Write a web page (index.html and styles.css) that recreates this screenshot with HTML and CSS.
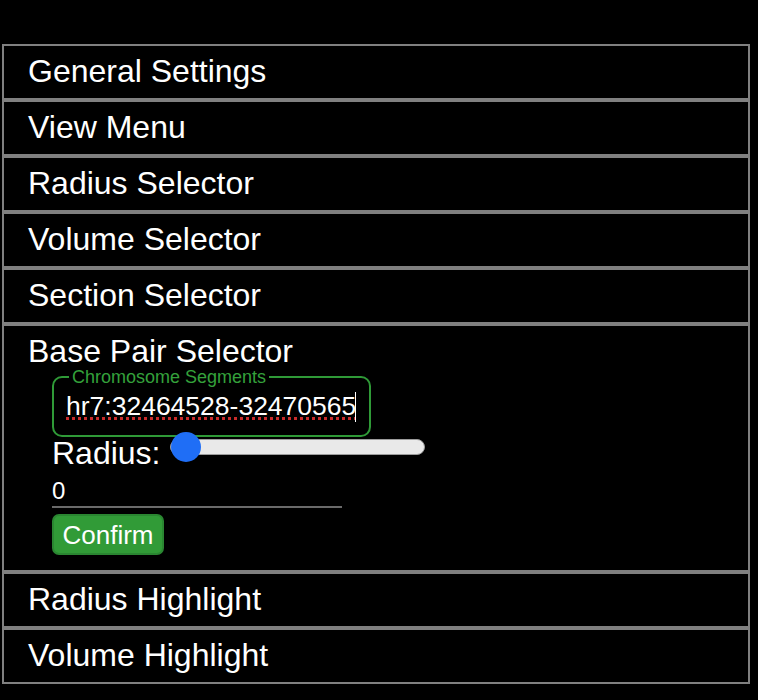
FILE: index.html
```html
<!DOCTYPE html>
<html>
<head>
<meta charset="utf-8">
<link rel="stylesheet" href="styles.css">
</head>
<body>
<div class="panel">
  <div class="item"><div class="item-title">General Settings</div></div>
  <div class="item"><div class="item-title">View Menu</div></div>
  <div class="item"><div class="item-title">Radius Selector</div></div>
  <div class="item"><div class="item-title">Volume Selector</div></div>
  <div class="item"><div class="item-title">Section Selector</div></div>
  <div class="item item-open">
    <div class="item-title">Base Pair Selector</div>
    <div class="item-body">
      <fieldset class="segments">
        <legend class="segments-legend">Chromosome Segments</legend>
        <div class="seg-field">
          <input class="seg-input" type="text" value="hr7:32464528-32470565" spellcheck="false">
          <span class="caret"></span>
        </div>
      </fieldset>
      <div class="radius-row">
        <label class="radius-label">Radius:</label>
        <input class="radius-range" type="range" min="0" max="100" value="0">
      </div>
      <input class="radius-value" type="text" value="0">
      <button class="confirm">Confirm</button>
    </div>
  </div>
  <div class="item"><div class="item-title">Radius Highlight</div></div>
  <div class="item"><div class="item-title">Volume Highlight</div></div>
</div>
</body>
</html>
```
FILE: styles.css
```css
html, body {
  margin: 0;
  padding: 0;
  background: #000;
  color: #fff;
  font-family: "Liberation Sans", Arial, sans-serif;
}

.panel {
  margin: 44px 0 0 2px;
  width: 748px;
  display: flex;
  flex-direction: column;
}

.item {
  border: 2px solid #808080;
}

.item-title {
  font-size: 32px;
  line-height: 36px;
  padding: 7px 24px 9px;
}

.item-open .item-title {
  line-height: 32px;
  padding: 9px 24px 0;
}

.item-body {
  display: flex;
  flex-direction: column;
  align-items: flex-start;
  padding: 0 0 15px 48px;
}

.segments {
  box-sizing: border-box;
  width: 319px;
  margin: 0;
  padding: 3px 12px 14px;
  border: 2px solid #2f9a37;
  border-radius: 10px;
}

.segments-legend {
  font-size: 18px;
  line-height: 20px;
  color: #34a13b;
  padding: 0 3px;
  margin-left: 3px;
}

.seg-field {
  position: relative;
  margin-top: 1px;
}

.seg-input {
  display: block;
  box-sizing: border-box;
  width: 291px;
  height: 30px;
  margin: 0;
  padding: 0;
  border: none;
  outline: none;
  background: transparent;
  color: #fff;
  font-family: "Liberation Sans", Arial, sans-serif;
  font-size: 26.5px;
  text-decoration: underline dotted #c92b2b;
  text-decoration-thickness: 3px;
  text-underline-offset: 2px;
}

.caret {
  position: absolute;
  left: 289px;
  top: 1px;
  width: 1px;
  height: 30px;
  background: #fff;
}

.radius-row {
  display: flex;
  align-items: flex-start;
  height: 32px;
}

.radius-label {
  font-size: 32px;
  line-height: 32px;
}

.radius-range {
  -webkit-appearance: none;
  appearance: none;
  width: 255px;
  height: 30px;
  margin: -5px 0 0 9px;
  padding: 0;
  background: transparent;
}

.radius-range::-webkit-slider-runnable-track {
  box-sizing: border-box;
  height: 16px;
  background: #e9e9e9;
  border: 1px solid #9c9c9c;
  border-radius: 8px;
}

.radius-range::-webkit-slider-thumb {
  -webkit-appearance: none;
  appearance: none;
  width: 30px;
  height: 30px;
  border-radius: 50%;
  background: #1f6ef6;
  border: none;
  margin-top: -8px;
}

.radius-value {
  box-sizing: content-box;
  width: 290px;
  height: 31px;
  margin: 0;
  padding: 6px 0 0;
  border: none;
  border-bottom: 2px solid #6a6a6a;
  outline: none;
  background: transparent;
  color: #fff;
  font-family: "Liberation Sans", Arial, sans-serif;
  font-size: 24px;
}

.confirm {
  box-sizing: border-box;
  width: 112px;
  height: 41px;
  margin-top: 6px;
  padding: 0;
  border: 2px solid #2a8631;
  border-radius: 7px;
  background: #319b37;
  color: #fff;
  font-family: "Liberation Sans", Arial, sans-serif;
  font-size: 26px;
  line-height: 30px;
}
```
